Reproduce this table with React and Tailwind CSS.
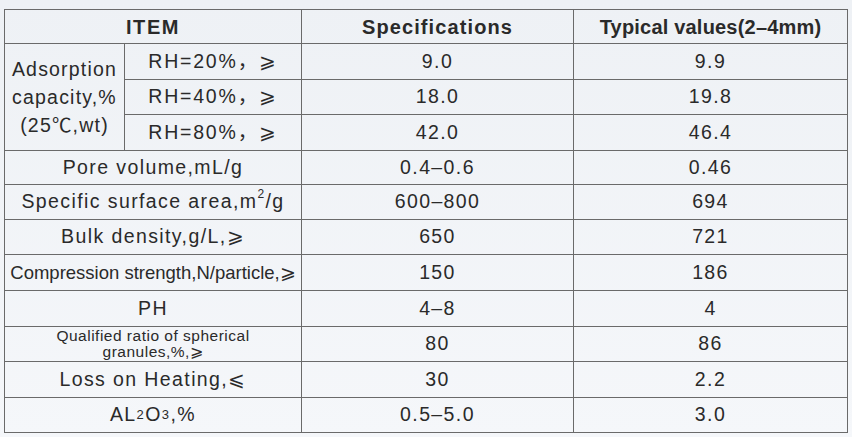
import React from 'react';

const rows = [
  { label: 'Pore volume,mL/g', spec: '0.4–0.6', typical: '0.46', h: 'h-[34px]' },
  {
    label: (
      <>
        Specific surface area,m<sup className="text-[12px] -top-[8px]">2</sup>/g
      </>
    ),
    spec: '600–800',
    typical: '694',
    h: 'h-[35px]',
  },
  { label: 'Bulk density,g/L,⩾', spec: '650', typical: '721', h: 'h-[35px]' },
  {
    label: 'Compression strength,N/particle,⩾',
    spec: '150',
    typical: '186',
    h: 'h-[36px]',
    small: true,
  },
  { label: 'PH', spec: '4–8', typical: '4', h: 'h-[36px]' },
  {
    label: (
      <span className="block text-[15.5px] leading-[16px] tracking-[0.5px]">
        Qualified ratio of spherical
        <br />
        granules,%,⩾
      </span>
    ),
    spec: '80',
    typical: '86',
    h: 'h-[35px]',
  },
  { label: 'Loss on Heating,⩽', spec: '30', typical: '2.2', h: 'h-[36px]' },
  {
    label: (
      <>
        AL<span className="text-[13px]">2</span>O<span className="text-[13px]">3</span>,%
      </>
    ),
    spec: '0.5–5.0',
    typical: '3.0',
    h: 'h-[35px]',
  },
];

const adsorption = [
  { rh: 'RH=20%，⩾', spec: '9.0', typical: '9.9', h: 'h-[36px]' },
  { rh: 'RH=40%，⩾', spec: '18.0', typical: '19.8', h: 'h-[35px]' },
  { rh: 'RH=80%，⩾', spec: '42.0', typical: '46.4', h: 'h-[36px]' },
];

const cell = 'flex items-center justify-center border-r border-b border-[#6a6a6a] text-center';

export default function App() {
  return (
    <div
      className="w-[852px] h-[437px] bg-gradient-to-b from-[#eef1f5] to-[#f5f7fa] pt-[9px] pl-[4px] text-[#2a2a2a] text-[19.5px] tracking-[1.4px]"
      style={{ fontFamily: '"Liberation Sans", Arial, "Noto Sans CJK SC", sans-serif' }}
    >
      <div className="grid grid-cols-[120px_177px_272px_274px] w-[844px] border-l border-t border-[#6a6a6a]">
        {/* header */}
        <div className={`${cell} col-span-2 h-[34px] font-bold text-[20px] tracking-[1.6px]`}>ITEM</div>
        <div className={`${cell} h-[34px] font-bold text-[20px] tracking-[1.1px]`}>Specifications</div>
        <div className={`${cell} h-[34px] font-bold text-[20px] tracking-[0.2px]`}>Typical values(2–4mm)</div>

        {/* adsorption block */}
        <div className={`${cell} row-span-3 leading-[28px] tracking-[1.2px]`}>
          <span>
            Adsorption
            <br />
            capacity,%
            <br />
            (25℃,wt)
          </span>
        </div>
        {adsorption.map((r, i) => (
          <React.Fragment key={i}>
            <div className={`${cell} ${r.h} tracking-[1.8px]`}>{r.rh}</div>
            <div className={`${cell} ${r.h}`}>{r.spec}</div>
            <div className={`${cell} ${r.h}`}>{r.typical}</div>
          </React.Fragment>
        ))}

        {rows.map((r, i) => (
          <React.Fragment key={i}>
            <div
              className={`${cell} col-span-2 ${r.h} ${
                r.small ? 'text-[18.5px] tracking-[0px] whitespace-nowrap' : ''
              }`}
            >
              {r.label}
            </div>
            <div className={`${cell} ${r.h}`}>{r.spec}</div>
            <div className={`${cell} ${r.h}`}>{r.typical}</div>
          </React.Fragment>
        ))}
      </div>
    </div>
  );
}
